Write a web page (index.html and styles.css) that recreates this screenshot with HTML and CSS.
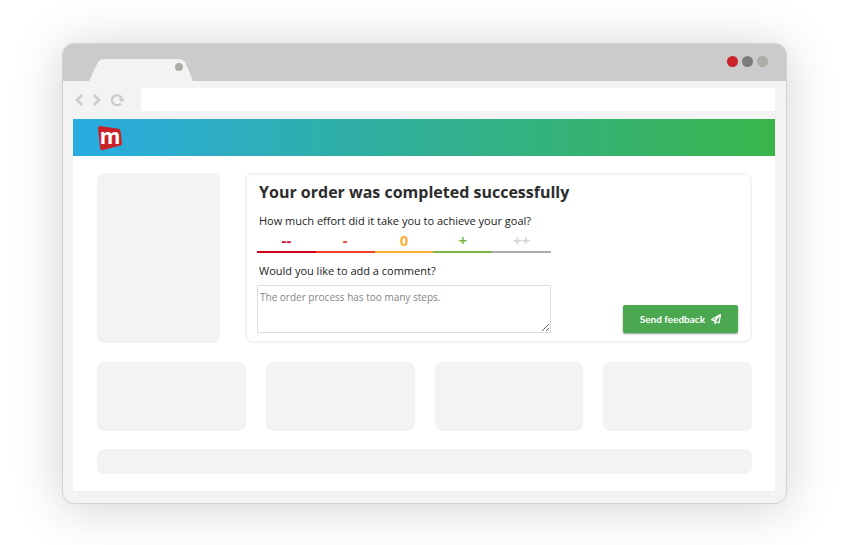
FILE: index.html
```html
<!DOCTYPE html>
<html lang="en">
<head>
  <meta charset="UTF-8">
  <meta name="viewport" content="width=device-width, initial-scale=1.0">
  <title>Order completed</title>
  <link rel="stylesheet" href="styles.css">
</head>
<body>
  <div class="browser">
    <div class="tab-bar">
      <svg class="tab" width="106" height="22" viewBox="0 0 106 22" aria-hidden="true">
        <path d="M0 22 L8 5 Q10 0 16 0 H89 Q95 0 97 5 L104 22 Z" fill="#f3f3f3"/>
        <circle cx="90" cy="8" r="4" fill="#adada6"/>
      </svg>
      <div class="dots">
        <span class="dot dot-red"></span>
        <span class="dot dot-dark"></span>
        <span class="dot dot-light"></span>
      </div>
    </div>

    <div class="toolbar">
      <button class="nav-button" type="button" aria-label="Back">
        <svg width="8" height="12" viewBox="0 0 8 12"><path d="M7 1 L2 6 L7 11" fill="none" stroke="#cbcbcb" stroke-width="2.6"/></svg>
      </button>
      <button class="nav-button" type="button" aria-label="Forward">
        <svg width="8" height="12" viewBox="0 0 8 12"><path d="M1 1 L6 6 L1 11" fill="none" stroke="#cbcbcb" stroke-width="2.6"/></svg>
      </button>
      <button class="nav-button" type="button" aria-label="Reload">
        <svg width="14" height="12" viewBox="0 0 14 12">
          <path d="M9.8 9.6 A5 5 0 1 1 11 5.6" fill="none" stroke="#cbcbcb" stroke-width="2.2"/>
          <path d="M7.4 5 H14 L10.7 8.4 Z" fill="#cbcbcb"/>
        </svg>
      </button>
      <input class="address" type="text" aria-label="Address">
    </div>

    <div class="page">
      <header class="header">
        <svg class="logo" width="26" height="26" viewBox="0 0 26 26" role="img" aria-label="m">
          <path d="M3.2 1 L21.6 3.8 Q23.3 4.1 23.5 5.8 L25 18 Q25.2 20 23.4 20.5 L5.4 25.2 Q3.4 25.6 3.1 23.6 L1 3.2 Q0.9 0.8 3.2 1 Z" fill="#c92128"/>
          <text class="logo-text" x="13" y="19" text-anchor="middle">m</text>
        </svg>
      </header>

      <main class="content">
        <div class="top-row">
          <div class="block"></div>
          <form class="card">
            <h1>Your order was completed successfully</h1>
            <fieldset class="effort">
              <legend>How much effort did it take you to achieve your goal?</legend>
              <div class="scale">
                <label class="step step-1"><input type="radio" name="effort" value="-2">--</label>
                <label class="step step-2"><input type="radio" name="effort" value="-1">-</label>
                <label class="step step-3"><input type="radio" name="effort" value="0">0</label>
                <label class="step step-4"><input type="radio" name="effort" value="1">+</label>
                <label class="step step-5"><input type="radio" name="effort" value="2">++</label>
              </div>
            </fieldset>
            <label class="question" for="comment">Would you like to add a comment?</label>
            <div class="comment-row">
              <textarea id="comment">The order process has too many steps.</textarea>
              <button class="send" type="button">
                Send feedback
                <svg width="10" height="10" viewBox="0 0 10 10" aria-hidden="true">
                  <path d="M9.6 0.4 L0.6 5.6 L3 6.7 L8 2.2 L4 7.2 V9.6 L5.4 7.8 L8 8.8 Z" fill="none" stroke="#fff" stroke-width="1.2" stroke-linejoin="round"/>
                </svg>
              </button>
            </div>
          </form>
        </div>
        <div class="blocks">
          <div class="block"></div>
          <div class="block"></div>
          <div class="block"></div>
          <div class="block"></div>
        </div>
        <div class="block block-footer"></div>
      </main>
    </div>
  </div>
</body>
</html>
```

FILE: styles.css
```css
* {
  box-sizing: border-box;
}
body {
  margin: 0;
  padding: 43px 60px 41px 62px;
  background-color: #fff;
  font-family: "Open Sans", "Noto Sans", sans-serif;
  color: #222;
}
button {
  font-family: inherit;
  border: none;
  cursor: pointer;
}
.browser {
  background-color: #f3f3f3;
  border: 1px solid #d2d2d2;
  border-radius: 12px;
  overflow: hidden;
  box-shadow: 0 4px 50px rgba(0, 0, 0, 0.18);
}
.tab-bar {
  display: flex;
  justify-content: space-between;
  align-items: flex-end;
  height: 37px;
  padding: 0 18px 0 26px;
  background-color: #cbcbcb;
}
.tab {
  display: block;
}
.dots {
  display: flex;
  gap: 4px;
  align-self: center;
  padding-bottom: 3px;
}
.dot {
  width: 11px;
  height: 11px;
  border-radius: 50%;
}
.dot-red {
  background-color: #c92128;
}
.dot-dark {
  background-color: #7b7b7b;
}
.dot-light {
  background-color: #adada6;
}
.toolbar {
  display: flex;
  align-items: center;
  gap: 10px;
  padding: 7px 11px 8px 12px;
}
.nav-button {
  display: flex;
  padding: 0;
  background: none;
}
.address {
  flex: 1;
  height: 23px;
  margin-left: 6px;
  border: none;
  background-color: #fff;
}
.page {
  margin: 0 11px 12px 10px;
  background-color: #fff;
}
.header {
  height: 37px;
  padding: 6px 24px;
  background: linear-gradient(to right, #29abe2, #39b54a);
}
.logo {
  display: block;
  overflow: visible;
}
.logo-text {
  fill: #fff;
  font-size: 21px;
  font-weight: 700;
}
.content {
  padding: 17px 23px 17px 24px;
}
.block {
  border-radius: 7px;
  background-color: #f3f3f3;
}
.top-row {
  display: grid;
  grid-template-columns: 123px 1fr;
  gap: 25px;
}
.card {
  padding: 5px 12px 8px 10px;
  border: 2px solid #f3f3f3;
  border-radius: 7px;
}
h1 {
  margin: 0;
  padding-left: 2px;
  font-size: 16px;
  line-height: 24px;
  color: #2d2d2d;
}
.effort {
  min-width: 0;
  margin: 0;
  padding: 0;
  border: none;
}
legend,
.question {
  display: block;
  padding: 8px 0 0 2px;
  font-size: 11px;
  line-height: 18px;
}
.question {
  padding-top: 9px;
}
.scale {
  display: flex;
  width: 294px;
}
.step {
  flex: 1;
  padding: 1px 0 2px;
  border-bottom: 2px solid;
  font-size: 15px;
  font-weight: 700;
  line-height: 18px;
  text-align: center;
  cursor: pointer;
}
.step input {
  position: absolute;
  opacity: 0;
}
.step-1 {
  color: #d0021b;
}
.step-2 {
  color: #f0402c;
}
.step-3 {
  color: #fbb034;
}
.step-4 {
  color: #7ab648;
}
.step-5 {
  color: #d5d5d5;
  border-color: #ababab;
}
.comment-row {
  display: flex;
  justify-content: space-between;
  align-items: flex-end;
  padding-top: 5px;
}
textarea {
  display: block;
  width: 294px;
  height: 48px;
  padding: 4px 2px;
  border: 1px solid #ddd;
  font-family: inherit;
  font-size: 10px;
  line-height: 15px;
  color: #858585;
}
.send {
  display: flex;
  align-items: center;
  gap: 6px;
  height: 28px;
  padding: 0 17px;
  border-radius: 2px;
  background-color: #4ba850;
  box-shadow: 0 1px 2px rgba(0, 0, 0, 0.4);
  font-family: Lato, sans-serif;
  font-size: 10px;
  font-weight: 700;
  color: #fff;
}
.blocks {
  display: grid;
  grid-template-columns: repeat(4, 1fr);
  gap: 20px;
  margin: 19px 0 18px;
}
.blocks .block {
  height: 69px;
}
.block-footer {
  height: 25px;
}
```
